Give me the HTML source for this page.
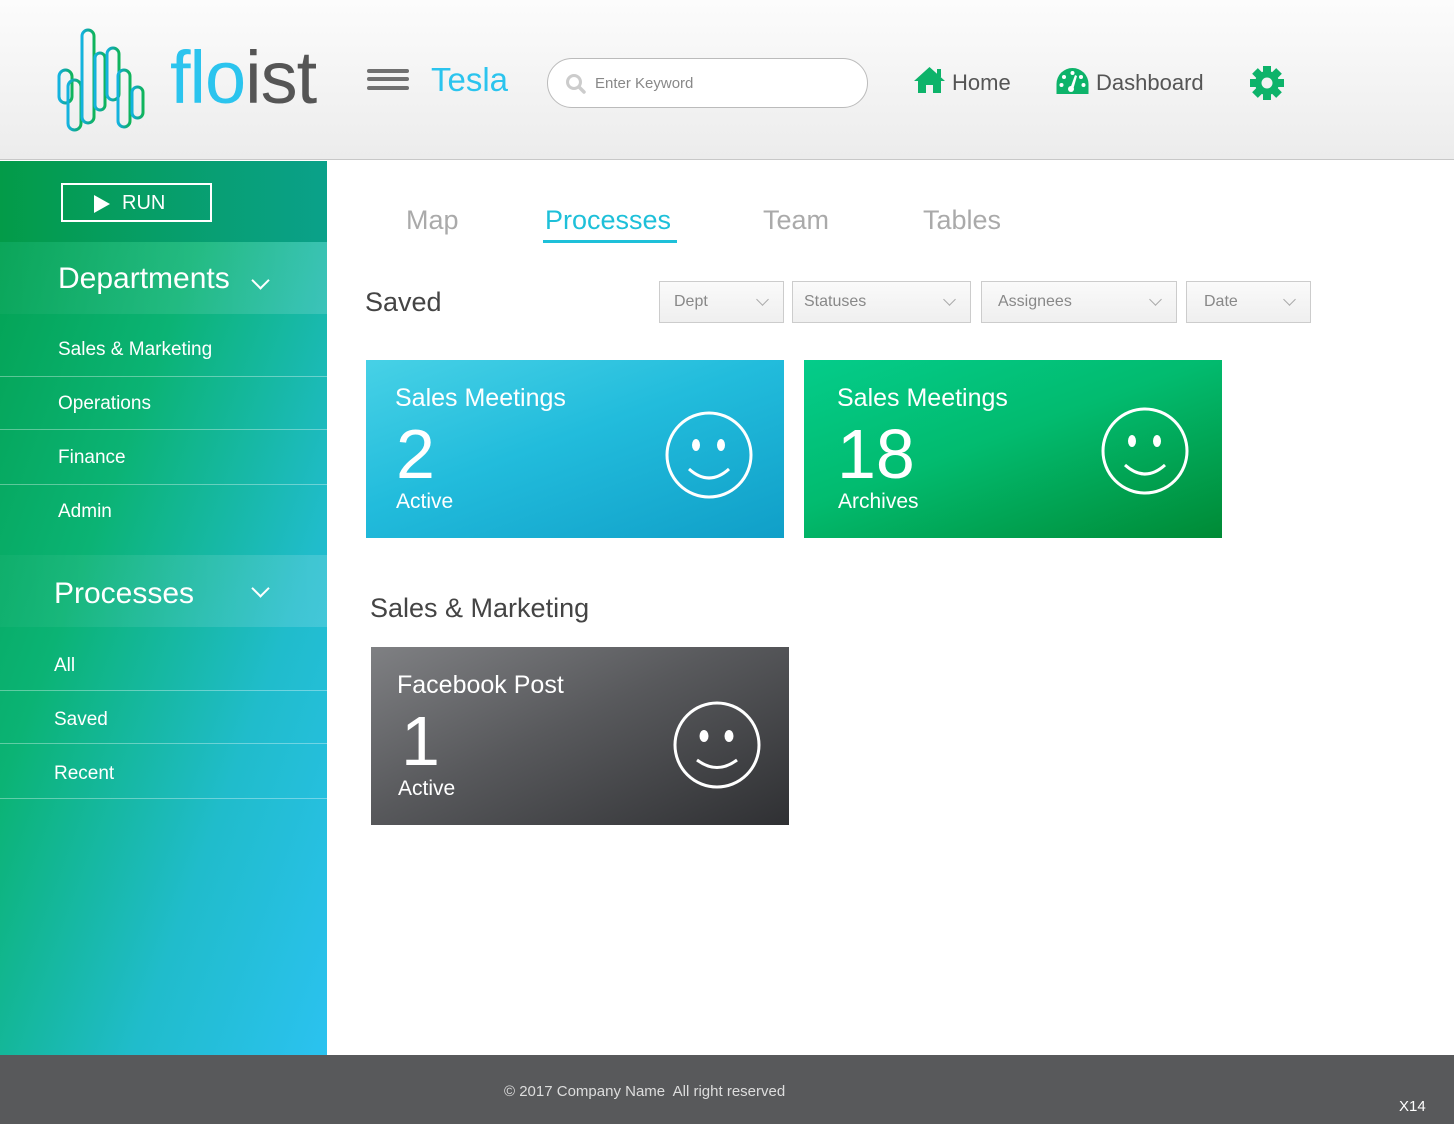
<!DOCTYPE html>
<html><head><meta charset="utf-8"><style>
*{margin:0;padding:0;box-sizing:border-box}
body{width:1454px;height:1124px;position:relative;overflow:hidden;font-family:"Liberation Sans",sans-serif;background:#fff}
.abs{position:absolute}
#hdr{left:0;top:0;width:1454px;height:160px;background:linear-gradient(#fcfcfc,#ececec);border-bottom:1px solid #c8c8c8}
#side{left:0;top:161px;width:327px;height:894px;background:linear-gradient(110deg,#02a04f 0%,#0bb374 35%,#20bccb 70%,#2bc2f0 100%)}
#side .top{left:0;top:0;width:327px;height:81px;background:linear-gradient(90deg,#039b48,#0aa18a)}
.sh{left:0;width:327px;height:72px;background:rgba(255,255,255,0.1);color:#fff;font-size:30px}
.si{left:0;width:327px;color:#fff;font-size:19px}
.ln{left:0;width:327px;height:1px;background:rgba(255,255,255,0.35)}
.chev{width:13px;height:13px;border-right:2px solid #fff;border-bottom:2px solid #fff;transform:rotate(45deg)}
.tab{top:205px;font-size:27px;color:#aaa}
.dd{top:281px;height:42px;border:1px solid #ccc;background:linear-gradient(#fafafa,#efefef);color:#888;font-size:16px;padding:11px 0 0 14px}
.dd i{position:absolute;right:16px;top:13px;width:9px;height:9px;border-right:1.5px solid #aaa;border-bottom:1.5px solid #aaa;transform:rotate(45deg)}
.card{color:#fff}
.card .t{position:absolute;left:29px;top:24px;font-size:25px}
.card .n{position:absolute;left:30px;top:54px;font-size:70px;line-height:80px}
.card .a{position:absolute;left:30px;top:130px;font-size:21px}
#foot{left:0;top:1055px;width:1454px;height:69px;background:#58595b;color:#ddd}
</style></head><body>
<div id="hdr" class="abs">
<svg class="abs" style="left:55px;top:26px" width="95" height="110">
<defs><linearGradient id="lg" x1="0" y1="0" x2="1" y2="0"><stop offset="0" stop-color="#14b3e0"/><stop offset="0.5" stop-color="#10a8a0"/><stop offset="1" stop-color="#10b55a"/></linearGradient></defs>
<g fill="none" stroke="url(#lg)" stroke-width="3">
<rect x="4" y="44" width="13" height="33" rx="6.5"/>
<rect x="13" y="54" width="13" height="50" rx="6.5"/>
<rect x="27" y="4" width="12" height="93" rx="6"/>
<rect x="40" y="27" width="10" height="57" rx="5"/>
<rect x="52" y="22" width="12" height="52" rx="6"/>
<rect x="63" y="44" width="12" height="57" rx="6"/>
<rect x="77" y="61" width="11" height="31" rx="5.5"/>
</g></svg>
<div class="abs" style="left:170px;top:28px;font-size:74px;line-height:100px;letter-spacing:-1px"><span style="color:#2bc4ee">flo</span><span style="color:#555">ist</span></div>
<div class="abs" style="left:367px;top:69px;width:42px;height:4px;background:#707070;border-radius:2px"></div>
<div class="abs" style="left:367px;top:77px;width:42px;height:4px;background:#707070;border-radius:2px"></div>
<div class="abs" style="left:367px;top:86px;width:42px;height:4px;background:#707070;border-radius:2px"></div>
<div class="abs" style="left:431px;top:61px;font-size:33px;color:#2bc4ee">Tesla</div>
<div class="abs" style="left:547px;top:58px;width:321px;height:50px;border:1px solid #bbb;border-radius:25px;background:#fff"></div>
<svg class="abs" style="left:565px;top:73px" width="22" height="22"><circle cx="9" cy="9" r="6.5" fill="none" stroke="#ccc" stroke-width="3"/><line x1="14" y1="14" x2="19" y2="19" stroke="#ccc" stroke-width="3.5" stroke-linecap="round"/></svg>
<div class="abs" style="left:595px;top:75px;font-size:15px;color:#888">Enter Keyword</div>
<svg class="abs" style="left:913px;top:66px" width="33" height="28"><path d="M16.5 1 L32 15 L28 15 L28 27 L20 27 L20 19 L13 19 L13 27 L5 27 L5 15 L1 15 Z" fill="#0db36a"/><rect x="24" y="3" width="4" height="8" fill="#0db36a"/></svg>
<div class="abs" style="left:952px;top:70px;font-size:22px;color:#555">Home</div>
<svg class="abs" style="left:1056px;top:67px" width="33" height="28"><path d="M0.5 27 L0.5 17 A16 16 0 0 1 32.5 17 L32.5 27 Z" fill="#0db36a"/><g fill="#fff"><circle cx="16.5" cy="6" r="2"/><circle cx="8" cy="10" r="2"/><circle cx="25" cy="10" r="2"/><circle cx="5.5" cy="18" r="2"/><circle cx="27.5" cy="18" r="2"/><circle cx="15" cy="22" r="3"/><path d="M14 22 L19 8 L21 9 L17 23 Z"/></g></svg>
<div class="abs" style="left:1096px;top:70px;font-size:22px;color:#555">Dashboard</div>
<svg class="abs" style="left:1249px;top:65px" width="36" height="36" viewBox="-18 -18 36 36"><g fill="#0db36a"><circle r="12"/><g id="t"><rect x="-4" y="-17" width="8" height="8"/></g><use href="#t" transform="rotate(45)"/><use href="#t" transform="rotate(90)"/><use href="#t" transform="rotate(135)"/><use href="#t" transform="rotate(180)"/><use href="#t" transform="rotate(225)"/><use href="#t" transform="rotate(270)"/><use href="#t" transform="rotate(315)"/></g><circle r="5.5" fill="#f3f3f3"/></svg>
</div>
<div id="side" class="abs">
<div class="abs top"></div>
<div class="abs" style="left:61px;top:22px;width:151px;height:39px;border:2px solid #fff"></div>
<svg class="abs" style="left:93px;top:33px" width="18" height="20"><path d="M1 1 L17 10 L1 19 Z" fill="#fff"/></svg>
<div class="abs" style="left:122px;top:31px;color:#fff;font-size:20px">RUN</div>
<div class="abs sh" style="top:81px;background:linear-gradient(90deg,rgba(255,255,255,0.03),rgba(255,255,255,0.15))"><span class="abs" style="left:58px;top:20px">Departments</span><div class="abs chev" style="left:254px;top:32px"></div></div>
<div class="abs si" style="top:178px"><span class="abs" style="left:58px">Sales &amp; Marketing</span></div>
<div class="abs ln" style="top:215px"></div>
<div class="abs si" style="top:232px"><span class="abs" style="left:58px">Operations</span></div>
<div class="abs ln" style="top:268px"></div>
<div class="abs si" style="top:286px"><span class="abs" style="left:58px">Finance</span></div>
<div class="abs ln" style="top:323px"></div>
<div class="abs si" style="top:340px"><span class="abs" style="left:58px">Admin</span></div>
<div class="abs sh" style="top:394px;background:linear-gradient(90deg,rgba(255,255,255,0.03),rgba(255,255,255,0.15))"><span class="abs" style="left:54px;top:22px">Processes</span><div class="abs chev" style="left:254px;top:27px"></div></div>
<div class="abs si" style="top:494px"><span class="abs" style="left:54px">All</span></div>
<div class="abs ln" style="top:529px"></div>
<div class="abs si" style="top:548px"><span class="abs" style="left:54px">Saved</span></div>
<div class="abs ln" style="top:582px"></div>
<div class="abs si" style="top:602px"><span class="abs" style="left:54px">Recent</span></div>
<div class="abs ln" style="top:637px"></div>
</div>
<div class="abs tab" style="left:406px">Map</div>
<div class="abs tab" style="left:545px;color:#1ec0d9">Processes</div>
<div class="abs" style="left:543px;top:240px;width:134px;height:3px;background:#1ec0d9"></div>
<div class="abs tab" style="left:763px">Team</div>
<div class="abs tab" style="left:923px">Tables</div>
<div class="abs" style="left:365px;top:287px;font-size:27px;color:#444">Saved</div>
<div class="abs dd" style="left:659px;width:125px">Dept<i></i></div>
<div class="abs dd" style="left:792px;width:179px;padding-left:11px">Statuses<i></i></div>
<div class="abs dd" style="left:981px;width:196px;padding-left:16px">Assignees<i></i></div>
<div class="abs dd" style="left:1186px;width:125px;padding-left:17px">Date<i></i></div>
<div class="abs card" style="left:366px;top:360px;width:418px;height:178px;background:linear-gradient(160deg,#47d1e6 0%,#22bcdc 45%,#109fc8 100%)">
<div class="t">Sales Meetings</div><div class="n">2</div><div class="a">Active</div>
<svg class="abs" style="left:298px;top:50px" width="90" height="90"><circle cx="45" cy="45" r="42" fill="none" stroke="#fff" stroke-width="3"/><ellipse cx="32" cy="35" rx="4" ry="6" fill="#fff"/><ellipse cx="57" cy="35" rx="4" ry="6" fill="#fff"/><path d="M25 59 Q45 77 65 59" fill="none" stroke="#fff" stroke-width="3"/></svg>
</div>
<div class="abs card" style="left:804px;top:360px;width:418px;height:178px;background:linear-gradient(160deg,#04cc8a 0%,#02bb6f 45%,#008a35 100%)">
<div class="t" style="left:33px">Sales Meetings</div><div class="n" style="left:33px">18</div><div class="a" style="left:34px">Archives</div>
<svg class="abs" style="left:296px;top:46px" width="90" height="90"><circle cx="45" cy="45" r="42" fill="none" stroke="#fff" stroke-width="3"/><ellipse cx="32" cy="35" rx="4" ry="6" fill="#fff"/><ellipse cx="57" cy="35" rx="4" ry="6" fill="#fff"/><path d="M25 59 Q45 77 65 59" fill="none" stroke="#fff" stroke-width="3"/></svg>
</div>
<div class="abs" style="left:370px;top:593px;font-size:27px;color:#444">Sales &amp; Marketing</div>
<div class="abs card" style="left:371px;top:647px;width:418px;height:178px;background:linear-gradient(155deg,#7f8083 0%,#58595c 45%,#2f3033 100%)">
<div class="t" style="left:26px">Facebook Post</div><div class="n" style="left:30px">1</div><div class="a" style="left:27px">Active</div>
<svg class="abs" style="left:301px;top:53px" width="90" height="90"><circle cx="45" cy="45" r="42" fill="none" stroke="#fff" stroke-width="3"/><ellipse cx="32" cy="36" rx="4.5" ry="6" fill="#fff"/><ellipse cx="57" cy="36" rx="4.5" ry="6" fill="#fff"/><path d="M25 60 Q45 75 65 60" fill="none" stroke="#fff" stroke-width="3"/></svg>
</div>
<div id="foot" class="abs">
<div class="abs" style="left:504px;top:28px;font-size:15px">© 2017 Company Name&nbsp; All right reserved</div>
<div class="abs" style="left:1399px;top:43px;font-size:15px;color:#fff">X14</div>
</div>
</body></html>
